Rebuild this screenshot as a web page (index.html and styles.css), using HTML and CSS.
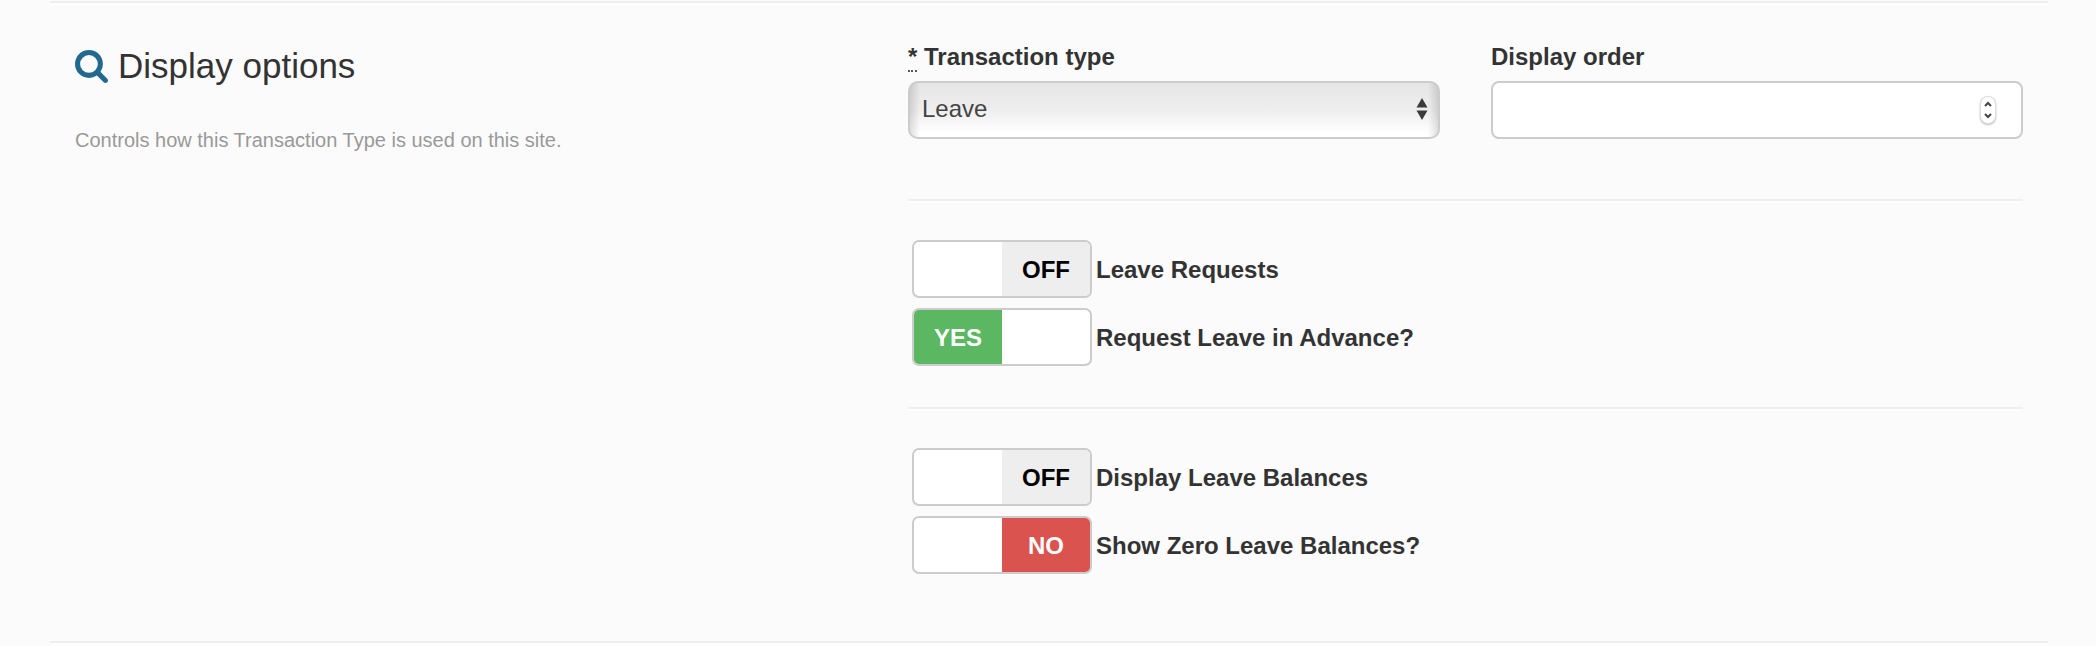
FILE: index.html
```html
<!DOCTYPE html>
<html lang="en">
<head>
<meta charset="utf-8">
<title>Display options</title>
<link rel="stylesheet" href="styles.css">
</head>
<body>
<main class="page">
  <hr class="rule">
  <form class="section">
    <div class="intro">
      <h2 class="title">
        <svg class="title-icon" viewBox="64 128 1664 1664" aria-hidden="true"><path d="M1216 832q0-185-131.500-316.500t-316.500-131.500-316.500 131.500-131.500 316.500 131.500 316.500 316.500 131.500 316.500-131.500 131.500-316.500zm512 832q0 52-38 90t-90 38q-54 0-90-38l-343-342q-179 124-399 124-143 0-273.500-55.500t-225-150-150-225-55.500-273.500 55.500-273.500 150-225 225-150 273.500-55.500 273.500 55.500 225 150 150 225 55.500 273.500q0 220-124 399l343 343q37 37 37 90z"/></svg>
        <span>Display options</span>
      </h2>
      <p class="hint">Controls how this Transaction Type is used on this site.</p>
    </div>
    <div class="fields">
      <div class="field-row">
        <div class="field">
          <label class="field-label" for="type"><abbr class="required" title="required">*</abbr> Transaction type</label>
          <div class="control">
            <select class="input select" id="type"><option>Leave</option></select>
            <svg class="select-arrows" viewBox="0 0 12 24" aria-hidden="true"><path d="M6 1l5.500 9.500H.5zM6 23l5.500-9.500H.5z"/></svg>
          </div>
        </div>
        <div class="field">
          <label class="field-label" for="order">Display order</label>
          <div class="control">
            <input class="input number" id="order" type="number">
            <svg class="stepper" viewBox="0 0 14 26" aria-hidden="true"><path d="M4 9l3-3 3 3M4 17l3 3 3-3"/></svg>
          </div>
        </div>
      </div>
      <hr class="rule">
      <div class="switches">
        <label class="switch"><input class="switch-input" type="checkbox"><span class="track"><span class="half"></span><span class="half off">OFF</span></span><span class="switch-label">Leave Requests</span></label>
        <label class="switch"><input class="switch-input" type="checkbox" checked><span class="track"><span class="half yes">YES</span><span class="half"></span></span><span class="switch-label">Request Leave in Advance?</span></label>
      </div>
      <hr class="rule">
      <div class="switches">
        <label class="switch"><input class="switch-input" type="checkbox"><span class="track"><span class="half"></span><span class="half off">OFF</span></span><span class="switch-label">Display Leave Balances</span></label>
        <label class="switch"><input class="switch-input" type="checkbox"><span class="track"><span class="half"></span><span class="half no">NO</span></span><span class="switch-label">Show Zero Leave Balances?</span></label>
      </div>
    </div>
  </form>
  <hr class="rule">
</main>
</body>
</html>
```
FILE: styles.css
```css
* { box-sizing: border-box; }
body {
  margin: 0;
  background: #fbfbfb;
  color: #333;
  font-family: "Liberation Sans", Arial, sans-serif;
  font-size: 24px;
}
.page { padding: 1px 48px 0 50px; }
.rule {
  margin: 0;
  border: 0;
  border-top: 2px solid #eee;
  border-bottom: 2px solid #fff;
}
.section {
  display: grid;
  grid-template-columns: 783fr 1115fr;
  gap: 50px;
  padding: 31px 25px 26px;
}
.title {
  display: flex;
  align-items: center;
  gap: 10px;
  margin: 0;
  font-size: 35px;
  font-weight: 300;
  line-height: 60px;
}
.title-icon { width: 33px; height: 33px; fill: #23698f; }
.hint {
  margin: 24px 0 0;
  color: #999;
  font-size: 20px;
  line-height: 40px;
}
.field-row {
  display: grid;
  grid-template-columns: 1fr 1fr;
  gap: 51px;
  margin-bottom: 60px;
}
.field-label {
  display: block;
  margin-bottom: 3px;
  font-weight: bold;
  line-height: 42px;
}
.required {
  border-bottom: 2px dotted #555;
  text-decoration: none;
}
.control { position: relative; }
.input {
  display: block;
  width: 100%;
  height: 58px;
  margin: 0;
  padding: 0 12px 3px;
  border: 2px solid #ccc;
  border-radius: 8px;
  background: #fff;
  color: #444;
  font: inherit;
  appearance: none;
}
.select {
  border-radius: 10px;
  background:
    linear-gradient(to right, #0000001f, #0000 10px),
    linear-gradient(to left, #0000001f, #0000 10px),
    linear-gradient(#e5e5e5, #eee 50%, #fff 92%);
}
.number { appearance: textfield; }
.number::-webkit-inner-spin-button { appearance: none; }
.select-arrows {
  position: absolute;
  top: 16px;
  right: 12px;
  width: 12px;
  height: 24px;
  fill: #3c3c3c;
  pointer-events: none;
}
.stepper {
  position: absolute;
  top: 16px;
  right: 28px;
  width: 14px;
  height: 26px;
  border-radius: 7px;
  background: #fff;
  box-shadow: 0 0 0 1px #ddd, 0 1px 2px 1px #bbb;
  fill: none;
  stroke: #444;
  stroke-width: 2;
  pointer-events: none;
}
.switches {
  display: grid;
  justify-items: start;
  gap: 10px;
  padding: 37px 4px 41px;
}
.switch {
  position: relative;
  display: flex;
  gap: 4px;
  font-weight: bold;
}
.switch-label { line-height: 60px; height: 58px; }
.switch-input {
  position: absolute;
  width: 180px;
  height: 58px;
  margin: 0;
  opacity: 0;
}
.track {
  display: grid;
  grid-template-columns: 1fr 1fr;
  width: 180px;
  height: 58px;
  overflow: hidden;
  border: 2px solid #ccc;
  border-radius: 7px;
  background: #fff;
  line-height: 56px;
  text-align: center;
}
.off { background: #eee; color: #000; }
.yes { background: #5bb762; color: #fff; }
.no { background: #da534f; color: #fff; }
```
